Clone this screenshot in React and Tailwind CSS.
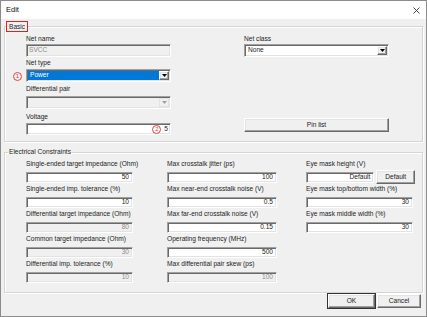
import React from 'react'

const sunken =
  'border border-t-[#a0a0a0] border-l-[#a0a0a0] border-r-white border-b-white shadow-[inset_1px_1px_0_#696969,inset_-1px_-1px_0_#e3e3e3]'
const raised =
  'border border-t-white border-l-white border-r-[#696969] border-b-[#696969] shadow-[inset_-1px_-1px_0_#a0a0a0,inset_1px_1px_0_#e3e3e3] bg-[#f0f0f0]'

const Label = ({ children }) => (
  <div className="h-[10px] leading-[10px] whitespace-nowrap text-[#222]">{children}</div>
)

const Field = ({ value, disabled, className = '' }) => (
  <div
    className={`${sunken} h-[11px] flex items-center justify-end pr-[3px] leading-none ${
      disabled ? 'bg-[#f0f0f0] text-[#8c8c8c]' : 'bg-white text-[#222]'
    } ${className}`}
  >
    {value}
  </div>
)

const Arrow = ({ color = '#000' }) => (
  <svg width="5" height="3" viewBox="0 0 5 3">
    <polygon points="0,0 5,0 2.5,3" fill={color} />
  </svg>
)

const Combo = ({ value, selected, disabled, className = '' }) => (
  <div className={`${sunken} h-[13px] flex items-stretch p-[1px] ${disabled ? 'bg-[#f0f0f0]' : 'bg-white'} ${className}`}>
    <div
      className={`flex-1 flex items-center pl-[2px] leading-none ${
        selected ? 'bg-[#0078d7] text-white' : 'text-[#222]'
      }`}
    >
      {value}
    </div>
    <div className={`w-[10px] flex items-center justify-center ${disabled ? 'bg-[#f0f0f0] border border-[#e3e3e3]' : raised}`}>
      <Arrow color={disabled ? '#a0a0a0' : '#000'} />
    </div>
  </div>
)

const Circled = ({ n }) => (
  <span className="inline-flex items-center justify-center w-[9px] h-[9px] rounded-full border border-[#e8413a] text-[#e8413a] text-[6px] leading-none">
    {n}
  </span>
)

const Row = ({ label, children, first }) => (
  <div className={first ? '' : 'mt-[1px]'}>
    <Label>{label}</Label>
    <div className="mt-[3px]">{children}</div>
  </div>
)

const col1 = [
  ['Single-ended target impedance (Ohm)', '50'],
  ['Single-ended imp. tolerance (%)', '10'],
  ['Differential target impedance (Ohm)', '80', true],
  ['Common target impedance (Ohm)', '30', true],
  ['Differential imp. tolerance (%)', '10', true],
]
const col2 = [
  ['Max crosstalk jitter (ps)', '100'],
  ['Max near-end crosstalk noise (V)', '0.5'],
  ['Max far-end crosstalk noise (V)', '0.15'],
  ['Operating frequency (MHz)', '500'],
  ['Max differential pair skew (ps)', '100', true],
]

export default function App() {
  return (
    <div className="w-[427px] h-[317px] bg-[#f0f0f0] border border-[#8c8c8c] flex flex-col font-['Liberation_Sans',Arial,sans-serif] text-[6.6px] text-[#222] overflow-hidden">
      {/* title bar */}
      <div className="h-[18px] bg-white flex items-center justify-between pl-[5px] pr-[6px] shrink-0">
        <span className="text-[7.5px] text-[#111]">Edit</span>
        <svg width="7" height="7" viewBox="0 0 7 7">
          <path d="M0.5 0.5 L6.5 6.5 M6.5 0.5 L0.5 6.5" stroke="#333" strokeWidth="0.9" />
        </svg>
      </div>

      {/* Basic */}
      <fieldset className="mt-[2px] ml-[3px] mr-[3px] border border-[#d5d5d5] shadow-[inset_1px_1px_0_#fff,1px_1px_0_#fff] p-0 m-0">
        <legend className="ml-[1px] h-[11px] px-[2px] border border-[#e0201a] leading-[9px]">Basic</legend>
        <div className="pt-[2px] pb-[6px] pl-[21px] grid grid-cols-[145px_145px] gap-x-[73px]">
          <div className="flex flex-col">
            <Label>Net name</Label>
            <Field value={<span className="mr-auto">SVCC</span>} disabled className="h-[13px] justify-start pl-[2px]" />
            <div className="mt-[1px]"><Label>Net type</Label></div>
            <div className="relative mt-[1px]">
              <span className="absolute left-[-13px] top-[2px]"><Circled n="1" /></span>
              <Combo value="Power" selected />
            </div>
            <div className="mt-[2px]"><Label>Differential pair</Label></div>
            <Combo disabled className="mt-[2px]" />
            <div className="mt-[3px]"><Label>Voltage</Label></div>
            <div className={`${sunken} mt-[1px] h-[12px] bg-white flex items-center justify-end gap-[3px] pr-[2px] leading-none`}>
              <Circled n="2" />
              <span>5</span>
            </div>
          </div>
          <div className="flex flex-col">
            <Label>Net class</Label>
            <Combo value="None" />
            <button className={`${raised} mt-[61px] h-[14px] leading-none text-[#222]`}>Pin list</button>
          </div>
        </div>
      </fieldset>

      {/* Electrical Constraints */}
      <fieldset className="mt-[5px] ml-[3px] mr-[3px] border border-[#d5d5d5] shadow-[inset_1px_1px_0_#fff,1px_1px_0_#fff] p-0 m-0">
        <legend className="ml-[3px] h-[10px] px-[1px] leading-[10px]">Electrical Constraints</legend>
        <div className="pt-[2px] pb-[9px] flex">
          <div className="ml-[21px] w-[107px]">
            {col1.map(([l, v, d], i) => (
              <Row key={l} label={l} first={i === 0}>
                <Field value={v} disabled={d} />
              </Row>
            ))}
          </div>
          <div className="ml-[34px] w-[110px]">
            {col2.map(([l, v, d], i) => (
              <Row key={l} label={l} first={i === 0}>
                <Field value={v} disabled={d} />
              </Row>
            ))}
          </div>
          <div className="ml-[29px] w-[109px]">
            <Label>Eye mask height (V)</Label>
            <div className="mt-[1px] flex items-center gap-[2px]">
              <Field value="Default" className="w-[69px]" />
              <button className={`${raised} w-[39px] h-[14px] leading-none`}>Default</button>
            </div>
            <div className="mt-[0px]"><Label>Eye mask top/bottom width (%)</Label></div>
            <div className="mt-[3px] w-[107px]"><Field value="30" /></div>
            <div className="mt-[1px]"><Label>Eye mask middle width (%)</Label></div>
            <div className="mt-[3px] w-[107px]"><Field value="30" /></div>
          </div>
        </div>
      </fieldset>

      {/* footer buttons */}
      <div className="mt-[1px] flex justify-end gap-[2px] mr-[5px]">
        <button className={`${raised} w-[47px] h-[14px] leading-none outline outline-1 outline-[#333]`}>OK</button>
        <button className={`${raised} w-[44px] h-[14px] leading-none`}>Cancel</button>
      </div>
    </div>
  )
}
